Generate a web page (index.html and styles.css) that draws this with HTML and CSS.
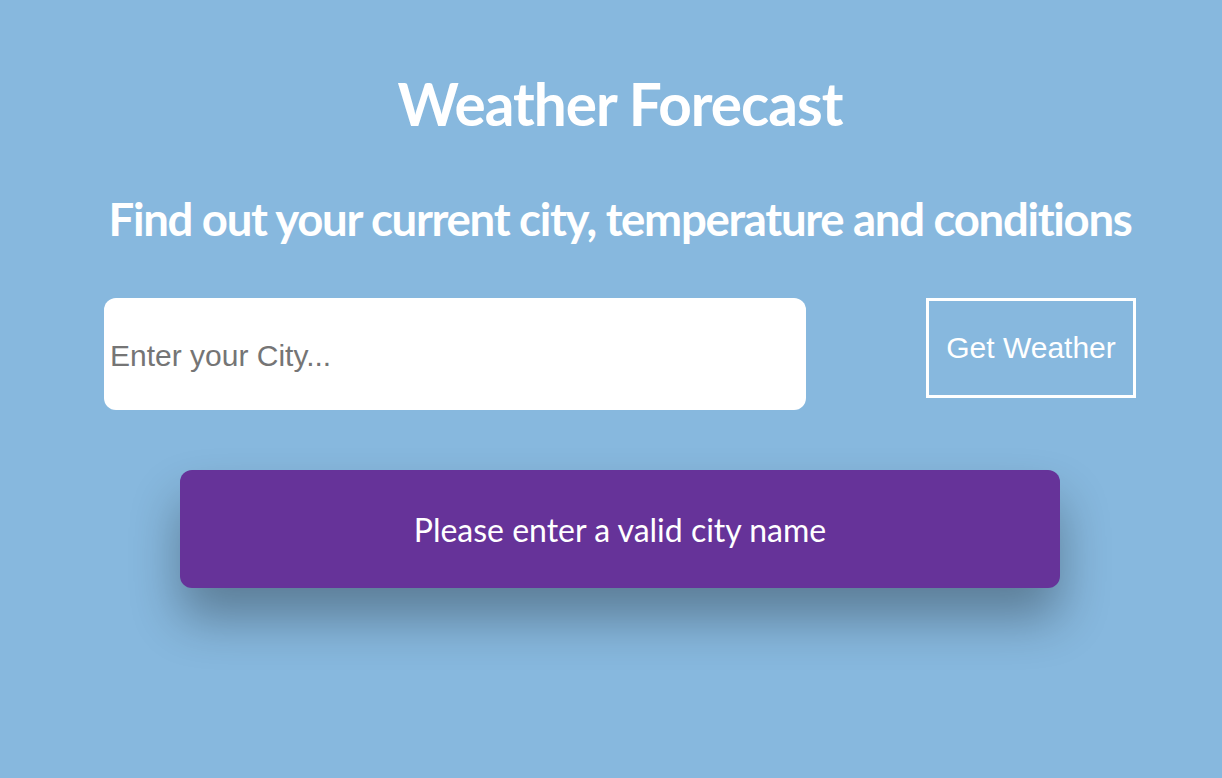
FILE: index.html
```html
<!DOCTYPE html>
<html lang="en">
<head>
<meta charset="utf-8">
<title>Weather Forecast</title>
<link rel="stylesheet" href="styles.css">
</head>
<body>
<main class="app">
  <h1 class="title">Weather Forecast</h1>
  <h2 class="subtitle">Find out your current city, temperature and conditions</h2>
  <form class="search">
    <input class="city-input" type="text" placeholder="Enter your City...">
    <button class="get-btn" type="button">Get Weather</button>
  </form>
  <div class="message">Please enter a valid city name</div>
</main>
</body>
</html>
```
FILE: styles.css
```css
* { box-sizing: border-box; }
html, body {
  margin: 0;
  height: 100%;
}
body {
  background: #87b8de;
  font-family: "Lato", "Liberation Sans", sans-serif;
  color: #fff;
}
.app {
  display: flex;
  flex-direction: column;
  align-items: center;
  padding: 65px 0 0 18px;
}
.title {
  margin: 0;
  font-family: "Lato", sans-serif;
  font-weight: 700;
  font-size: 58.5px;
  line-height: 76px;
  letter-spacing: -1px;
}
.subtitle {
  margin: 52px 0 0;
  font-family: "Lato", sans-serif;
  font-weight: 700;
  font-size: 45.5px;
  line-height: 52px;
  letter-spacing: -1.3px;
}
.search {
  margin-top: 53px;
  width: 1032px;
  display: flex;
  justify-content: space-between;
  align-items: flex-start;
}
.city-input {
  width: 702px;
  height: 112px;
  border: none;
  border-radius: 12px;
  background: #fff;
  padding: 4px 6px 0;
  font-family: "Liberation Sans", Arial, sans-serif;
  font-size: 30px;
  color: #333;
  outline: none;
}
.city-input::placeholder { color: #757575; }
.get-btn {
  width: 210px;
  height: 100px;
  background: transparent;
  border: 3px solid #fff;
  border-radius: 0;
  color: #fff;
  font-family: "Liberation Sans", Arial, sans-serif;
  font-size: 30px;
  padding: 0;
}
.message {
  margin-top: 60px;
  width: 880px;
  height: 118px;
  border-radius: 12px;
  background: #663399;
  display: flex;
  align-items: center;
  justify-content: center;
  font-family: "Lato", sans-serif;
  font-size: 32px;
  box-shadow: 0 30px 50px rgba(0, 0, 0, 0.32);
}
```
